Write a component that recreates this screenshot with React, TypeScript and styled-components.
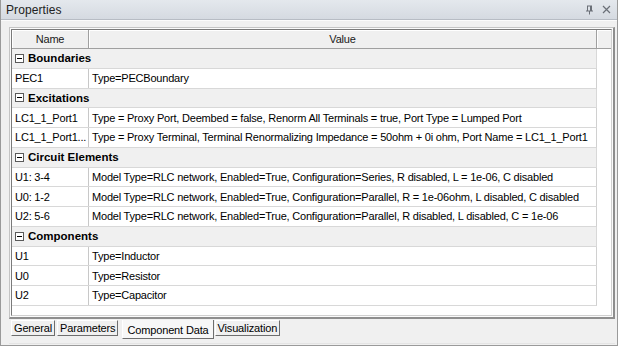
import React from 'react';
import styled, { createGlobalStyle } from 'styled-components';

const GlobalStyle = createGlobalStyle`
body {
  margin: 0;
  background: #fff;
  font-family: "Liberation Sans", Arial, sans-serif;
}
`;

type Item = { name: string; value: string };
type Group = { title: string; items: Item[] };

const groups: Group[] = [
  { title: 'Boundaries', items: [{ name: 'PEC1', value: 'Type=PECBoundary' }] },
  {
    title: 'Excitations',
    items: [
      {
        name: 'LC1_1_Port1',
        value: 'Type = Proxy Port, Deembed = false, Renorm All Terminals = true, Port Type = Lumped Port',
      },
      {
        name: 'LC1_1_Port1...',
        value: 'Type = Proxy Terminal, Terminal Renormalizing Impedance = 50ohm + 0i ohm, Port Name = LC1_1_Port1',
      },
    ],
  },
  {
    title: 'Circuit Elements',
    items: [
      {
        name: 'U1: 3-4',
        value: 'Model Type=RLC network, Enabled=True, Configuration=Series, R disabled, L = 1e-06, C disabled',
      },
      {
        name: 'U0: 1-2',
        value: 'Model Type=RLC network, Enabled=True, Configuration=Parallel, R = 1e-06ohm, L disabled, C disabled',
      },
      {
        name: 'U2: 5-6',
        value: 'Model Type=RLC network, Enabled=True, Configuration=Parallel, R disabled, L disabled, C = 1e-06',
      },
    ],
  },
  {
    title: 'Components',
    items: [
      { name: 'U1', value: 'Type=Inductor' },
      { name: 'U0', value: 'Type=Resistor' },
      { name: 'U2', value: 'Type=Capacitor' },
    ],
  },
];

const tabs = ['General', 'Parameters', 'Component Data', 'Visualization'];

const App = () => {
  return (
    <>
      <GlobalStyle />
      <Panel>
        <TitleBar>
          <Title>Properties</Title>
          <TitleButtons>
            <svg width="9" height="10" viewBox="0 0 9 10">
              <path d="M2 1h5M2.5 1v5M6.5 1v5M1 6h7M4.5 6v3.5M5.5 1v5" stroke="#6a6f77" strokeWidth="1" fill="none" />
            </svg>
            <svg width="9" height="9" viewBox="0 0 9 9">
              <path d="M1 1l7 7M8 1l-7 7" stroke="#6a6f77" strokeWidth="1.2" fill="none" />
            </svg>
          </TitleButtons>
        </TitleBar>

        <Body>
          <Frame>
            <GridBox>
              <HeaderRow>
                <HeaderCell>Name</HeaderCell>
                <HeaderCell>Value</HeaderCell>
                <HeaderCell />
              </HeaderRow>

              {groups.map((g) => (
                <React.Fragment key={g.title}>
                  <GroupRow>
                    <Toggle>
                      <svg width="9" height="9" viewBox="0 0 9 9">
                        <rect x="0.5" y="0.5" width="8" height="8" fill="#fff" stroke="#5a5a5a" />
                        <path d="M2 4.5h5" stroke="#000" strokeWidth="1" />
                      </svg>
                    </Toggle>
                    <GroupTitle>{g.title}</GroupTitle>
                  </GroupRow>
                  {g.items.map((it) => (
                    <DataRow key={g.title + it.name}>
                      <NameCell>{it.name}</NameCell>
                      <ValueCell>{it.value}</ValueCell>
                    </DataRow>
                  ))}
                </React.Fragment>
              ))}
            </GridBox>
          </Frame>

          <TabStrip>
            {tabs.map((t) => (
              <Tab key={t} $active={t === 'Component Data'}>
                {t}
              </Tab>
            ))}
          </TabStrip>
        </Body>
      </Panel>
    </>
  );
};

export default App;

const Panel = styled.div`
width: 618px;
height: 346px;
box-sizing: border-box;
border: 1px solid #9a9a9a;
border-top: none;
background: #f0f0f0;
display: flex;
flex-direction: column;
overflow: hidden;
`;

const TitleBar = styled.div`
height: 20px;
box-sizing: border-box;
display: flex;
align-items: center;
justify-content: space-between;
padding: 0 5px 0 5px;
background: linear-gradient(#e4e8ed, #d5dae1);
border-bottom: 1px solid #b7bcc4;
`;

const Title = styled.div`
font-size: 12px;
color: #222;
letter-spacing: 0.1px;
`;

const TitleButtons = styled.div`
display: flex;
align-items: center;
gap: 8px;
padding-right: 1px;
`;

const Body = styled.div`
flex: 1;
display: flex;
flex-direction: column;
padding: 6px 2px 0 8px;
border-top: 1px solid #fbfbfb;
`;

const Frame = styled.div`
height: 292px;
box-sizing: border-box;
border: 1px solid #c4c4c4;
border-right-color: #8e8e8e;
border-bottom-color: #8e8e8e;
border-right-width: 2px;
border-bottom-width: 2px;
padding: 1px;
background: #fbfbfb;
`;

const GridBox = styled.div`
height: 100%;
box-sizing: border-box;
border: 1px solid #7a7a7a;
border-right-color: #d0d0d0;
border-bottom-color: #d0d0d0;
background: #fff;
font-size: 11px;
letter-spacing: -0.2px;
color: #000;
`;

const HeaderRow = styled.div`
display: grid;
grid-template-columns: 77px 508px 1fr;
height: 19px;
box-sizing: border-box;
background: #f0f0f0;
border-bottom: 1px solid #a0a0a0;
`;

const HeaderCell = styled.div`
display: flex;
align-items: center;
justify-content: center;
border-right: 1px solid #a0a0a0;
box-shadow: inset 1px 1px 0 #fff;
color: #1a1a1a;
&:last-child {
  border-right: none;
}
`;

const GroupRow = styled.div`
width: 585px;
height: 19.75px;
box-sizing: border-box;
display: flex;
align-items: center;
background: #f0f0f0;
border-bottom: 1px solid #d8d8d8;
border-right: 1px solid #d8d8d8;
`;

const Toggle = styled.span`
display: flex;
width: 9px;
height: 9px;
margin: 0 4px 0 3px;
`;

const GroupTitle = styled.span`
font-weight: bold;
font-size: 11.5px;
letter-spacing: 0;
`;

const DataRow = styled.div`
width: 585px;
height: 19.75px;
box-sizing: border-box;
display: grid;
grid-template-columns: 77px 1fr;
border-bottom: 1px solid #d8d8d8;
border-right: 1px solid #d0d0d0;
`;

const NameCell = styled.div`
display: flex;
align-items: center;
padding-left: 3px;
border-right: 1px solid #c8c8c8;
white-space: nowrap;
overflow: hidden;
`;

const ValueCell = styled.div`
display: flex;
align-items: center;
padding-left: 3px;
white-space: nowrap;
overflow: hidden;
`;

const TabStrip = styled.div`
display: flex;
align-items: flex-start;
gap: 2px;
padding-left: 2px;
height: 23px;
border-bottom: 1px solid #e4e4e4;
margin-top: 1px;
`;

const Tab = styled.div<{ $active?: boolean }>`
font-size: 11px;
letter-spacing: -0.15px;
color: #000;
box-sizing: border-box;
padding: ${(p) => (p.$active ? '4px 4px 2px' : '1px 2px 1px')};
margin: ${(p) => (p.$active ? '0 -1px 0 2px' : '0')};
height: ${(p) => (p.$active ? '19px' : '16px')};
background: ${(p) => (p.$active ? '#f7f7f7' : '#f0f0f0')};
border: 1px solid #fff;
border-right-color: #6e6e6e;
border-bottom-color: #6e6e6e;
border-top: ${(p) => (p.$active ? 'none' : '1px solid #fff')};
white-space: nowrap;
`;
